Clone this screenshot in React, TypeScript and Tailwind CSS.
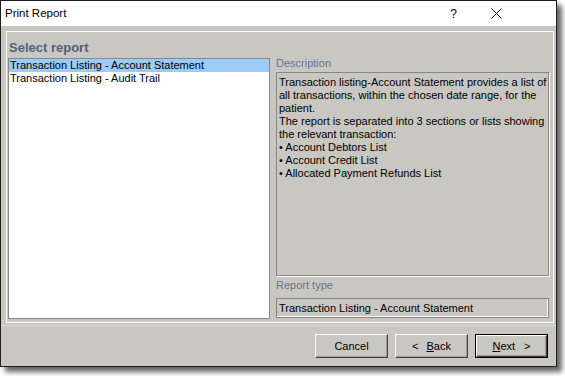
import React from "react"

const font = { fontFamily: '"Liberation Sans", Arial, sans-serif' }

const descLines = [
    "Transaction listing-Account Statement provides a list of",
    "all transactions, within the chosen date range, for the",
    "patient.",
    "The report is separated into 3 sections or lists showing",
    "the relevant transaction:",
    "\u2022 Account Debtors List",
    "\u2022 Account Credit List",
    "\u2022 Allocated Payment Refunds List",
]

function Button({ children, isDefault = false }: { children: React.ReactNode; isDefault?: boolean }) {
    if (isDefault) {
        return (
            <div className="w-[73px] h-[24px] border border-black">
                <div className="w-full h-full flex items-center justify-center text-[11px] text-black border-t border-l border-t-white border-l-white border-b border-r border-b-[#404040] border-r-[#404040] shadow-[inset_-1px_-1px_0_#9a9a9a]">
                    {children}
                </div>
            </div>
        )
    }
    return (
        <div className="w-[73px] h-[24px] flex items-center justify-center text-[11px] text-black border-t border-l border-t-white border-l-white border-b border-r border-b-[#404040] border-r-[#404040] shadow-[inset_-1px_-1px_0_#9a9a9a]">
            {children}
        </div>
    )
}

export default function App() {
    return (
        <div className="w-[565px] h-[376px] bg-white overflow-hidden" style={font}>
            <div className="w-[557px] h-[367px] border border-[#1e1e1e] bg-[#c9c7c1] flex flex-col shadow-[5px_5px_5px_rgba(0,0,0,0.6)]">
                {/* title bar */}
                <div className="h-[25px] bg-white flex items-center shrink-0">
                    <span className="pl-[4px] text-[11.5px] text-black">Print Report</span>
                    <span className="ml-auto mr-[34px] text-[12px] text-black">?</span>
                    <svg width="11" height="11" viewBox="0 0 11 11" className="mr-[54px]">
                        <path d="M0.5 0.5 L10.5 10.5 M10.5 0.5 L0.5 10.5" stroke="#111" strokeWidth="1" />
                    </svg>
                </div>

                {/* body */}
                <div className="flex-1 flex flex-col">
                    <div className="mt-[5px] ml-[5px] mr-[2px] h-[292px] border border-white flex flex-col">
                        <div className="h-[23px] pt-[8px] pl-[2px] text-[13px] leading-[15px] font-bold text-[#57607c]">
                            Select report
                        </div>
                        <div className="flex pl-[1px] pr-[4px] gap-[6px] h-[264px]">
                            <div className="pt-[3px] w-[262px]">
                                <div className="h-[261px] border border-[#828790] bg-white text-[11px] leading-[13px] text-black">
                                    <div className="bg-[#9ccbf8] pl-[1px] whitespace-nowrap">Transaction Listing - Account Statement</div>
                                    <div className="pl-[1px] whitespace-nowrap">Transaction Listing - Audit Trail</div>
                                </div>
                            </div>
                            <div className="w-[273px] flex flex-col">
                                <div className="h-[16px] leading-[16px] text-[11px] text-[#6a7397]">Description</div>
                                <div className="mt-[1px] h-[204px] border border-[#868686] shadow-[1px_1px_0_#ffffff] pl-[2px] pt-[3px] text-[11px] leading-[13px] text-black">
                                    {descLines.map((l, i) => (
                                        <div key={i} className="whitespace-nowrap">{l}</div>
                                    ))}
                                </div>
                                <div className="mt-[1px] h-[16px] leading-[16px] text-[11px] text-[#6a7397]">Report type</div>
                                <div className="mt-[5px] h-[20px] border border-[#868686] shadow-[inset_-1px_-1px_0_#ffffff] pl-[2px] flex items-center text-[11px] text-black whitespace-nowrap">
                                    Transaction Listing - Account Statement
                                </div>
                            </div>
                        </div>
                    </div>

                    {/* footer */}
                    <div className="mt-[2px] flex-1 border-t border-[#dcdad5] pt-[8px] pr-[8px] flex justify-end gap-[7px]">
                        <Button>Cancel</Button>
                        <Button>
                            <span>&lt;</span>
                            <span className="ml-[8px]"><span className="underline">B</span>ack</span>
                        </Button>
                        <Button isDefault>
                            <span><span className="underline">N</span>ext</span>
                            <span className="ml-[9px]">&gt;</span>
                        </Button>
                    </div>
                </div>
            </div>
        </div>
    )
}
